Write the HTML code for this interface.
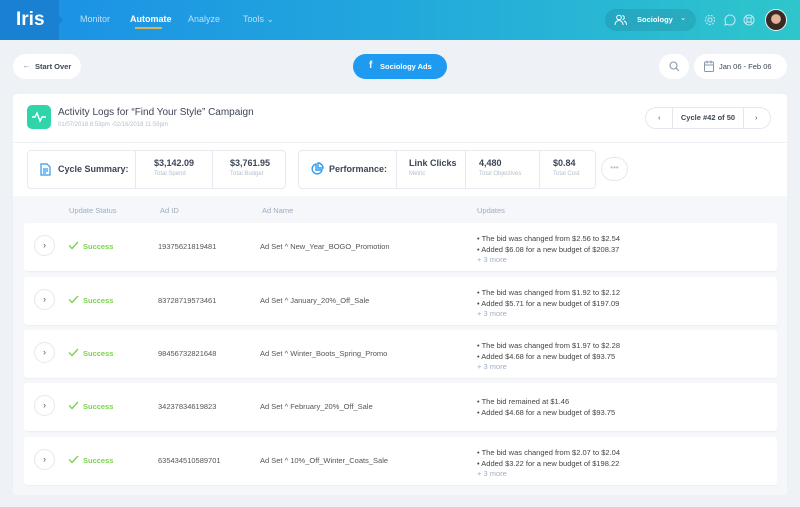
<!DOCTYPE html>
<html><head><style>
*{margin:0;padding:0;box-sizing:border-box}
body{width:800px;height:507px;background:#eef1f6;font-family:"Liberation Sans",sans-serif;position:relative;overflow:hidden;color:#3d4656}
.abs{position:absolute}
.hdr{left:0;top:0;width:800px;height:40px;background:linear-gradient(90deg,#1b8fe6 0%,#22a8dc 50%,#2ec6cc 100%)}
.logo{left:0;top:0;width:59px;height:40px;background:#1a80d2;color:#fff;font-weight:bold;font-size:19px;padding:9px 0 0 16px}
.logo:after{content:"";position:absolute;right:-4px;top:16px;border-left:4px solid #1a80d2;border-top:4px solid transparent;border-bottom:4px solid transparent}
.nav{top:14px;font-size:9px;color:#bfe0f7}
.pill{background:#fff;border-radius:14px;font-size:7.5px;font-weight:bold;color:#3d4656}
.card{left:13px;top:94px;width:774px;height:401px;background:#fff;border-radius:4px}
.tbl{left:13px;top:196px;width:774px;height:299px;background:#f5f7fa;border-radius:0 0 4px 4px}
.row{left:24px;width:753px;height:48px;background:#fff;border-radius:3px;box-shadow:0 1px 1px rgba(0,0,0,.04);font-size:7.5px}
.row .c{position:absolute;left:10px;top:12px;width:21px;height:21px;border-radius:50%;border:1px solid #e4e8ee;text-align:center;line-height:19px;color:#555;font-size:9px}
.row .s{position:absolute;left:44px;top:19px;color:#7ed04f;font-weight:bold;padding-left:15px}
.row .s svg{position:absolute;left:0;top:-1px}
.row .id{position:absolute;left:134px;top:19px;color:#555}
.row .n{position:absolute;left:236px;top:19px;color:#555}
.row .u{position:absolute;left:453px;top:11px;color:#444;line-height:10.5px}
.row .u i{font-style:normal;color:#9fb0c4}
.box{border:1px solid #e6eaf0;border-radius:4px;height:39px;top:150px}
.val{font-size:9px;font-weight:bold;color:#3d4656}
.lbl{font-size:6px;color:#b4bfcc;margin-top:3px}
.th{top:206px;font-size:7.5px;color:#9eacbd}
</style></head><body>
<div class="abs hdr"></div>
<div class="abs logo">Iris</div>
<div class="abs nav" style="left:80px">Monitor</div>
<div class="abs nav" style="left:130px;color:#fff;font-weight:bold">Automate</div>
<div class="abs" style="left:135px;top:27px;width:27px;height:2px;background:#d9b35a"></div>
<div class="abs nav" style="left:188px">Analyze</div>
<div class="abs nav" style="left:243px">Tools ⌄</div>
<div class="abs" style="left:605px;top:9px;width:91px;height:22px;border-radius:11px;background:rgba(0,0,0,.09);color:#fff;font-size:7.5px;font-weight:bold;padding:6px 0 0 32px">Sociology<span style="position:absolute;left:75px;top:4px;font-weight:normal">⌄</span></div>
<svg class="abs" style="left:614px;top:14px" width="13" height="12" viewBox="0 0 13 12" fill="none" stroke="#fff" stroke-width="1"><circle cx="5" cy="3.5" r="2.3"/><path d="M1 11c0-3 2-4.5 4-4.5s4 1.5 4 4.5M8.5 1.5a2.2 2.2 0 0 1 0 4.3M10 7c1.5.5 2.5 2 2.5 4"/></svg>
<svg class="abs" style="left:704px;top:14px" width="12" height="12" viewBox="0 0 12 12" fill="none" stroke="#bfe6f2" stroke-width="1.1"><circle cx="6" cy="6" r="2"/><circle cx="6" cy="6" r="4.6" stroke-dasharray="2 1.2"/></svg>
<svg class="abs" style="left:724px;top:14px" width="12" height="12" viewBox="0 0 12 12" fill="none" stroke="#bfe6f2" stroke-width="1.1"><path d="M6 1a5 5 0 1 1-2.5 9.3L1 11l.7-2.5A5 5 0 0 1 6 1z"/></svg>
<svg class="abs" style="left:743px;top:14px" width="12" height="12" viewBox="0 0 12 12" fill="none" stroke="#bfe6f2" stroke-width="1.1"><circle cx="6" cy="6" r="5"/><circle cx="6" cy="6" r="2.2"/><path d="M2.5 2.5l2 2M9.5 2.5l-2 2M2.5 9.5l2-2M9.5 9.5l-2-2"/></svg>
<div class="abs" style="left:765px;top:9px;width:22px;height:22px;border-radius:50%;border:1.5px solid #e8f6f8;background:radial-gradient(circle at 50% 45%,#e2b49a 0 30%,#3a2a26 35%)"></div>

<div class="abs pill" style="left:13px;top:54px;width:68px;height:25px;padding:8px 0 0 22px"><span style="position:absolute;left:9px;top:6px;color:#8aa0b8;font-weight:normal;font-size:9px">←</span>Start Over</div>
<div class="abs" style="left:353px;top:54px;width:94px;height:25px;border-radius:13px;background:#1e9af0;color:#fff;font-size:7.5px;font-weight:bold;padding:8px 0 0 27px"><span style="position:absolute;left:16px;top:6px;font-size:10px">f</span>Sociology Ads</div>
<div class="abs pill" style="left:659px;top:54px;width:30px;height:25px"></div>
<svg class="abs" style="left:669px;top:61px" width="11" height="11" viewBox="0 0 11 11" fill="none" stroke="#8a97a8" stroke-width="1.1"><circle cx="4.5" cy="4.5" r="3.5"/><path d="M7 7l3 3"/></svg>
<div class="abs pill" style="left:694px;top:54px;width:93px;height:25px;padding:8px 0 0 25px;font-weight:normal">Jan 06 - Feb 06</div>
<svg class="abs" style="left:704px;top:60px" width="10" height="12" viewBox="0 0 10 12" fill="none" stroke="#8a97a8" stroke-width="1"><rect x="0.5" y="2" width="9" height="9.5" rx="1"/><path d="M0.5 5h9M3 0.5v3M7 0.5v3"/></svg>

<div class="abs card"></div>
<div class="abs" style="left:27px;top:105px;width:24px;height:24px;border-radius:5px;background:#2fd5a8"></div>
<svg class="abs" style="left:31px;top:111px" width="16" height="12" viewBox="0 0 16 12" fill="none" stroke="#fff" stroke-width="1.4"><path d="M1 6h3l2-4 3 8 2-4h4"/></svg>
<div class="abs" style="left:58px;top:107px;font-size:10px;color:#3d4656">Activity Logs for “Find Your Style” Campaign</div>
<div class="abs" style="left:58px;top:122px;font-size:6px;color:#b4bfcc">01/07/2018 8:53pm -02/16/2018 11:59pm</div>
<div class="abs" style="left:645px;top:107px;width:126px;height:22px;border:1px solid #e4e8ee;border-radius:11px;font-size:7.5px;color:#3d4656">
<span style="position:absolute;left:12px;top:5px">‹</span><span style="position:absolute;left:26px;top:0;width:72px;height:20px;border-left:1px solid #e4e8ee;border-right:1px solid #e4e8ee;text-align:center;line-height:20px;font-weight:bold">Cycle #42 of 50</span><span style="position:absolute;left:109px;top:5px">›</span></div>
<div class="abs" style="left:13px;top:142px;width:774px;height:1px;background:#eef1f5"></div>

<div class="abs box" style="left:27px;width:259px"></div>
<svg class="abs" style="left:40px;top:163px" width="11" height="13" viewBox="0 0 11 13" fill="none" stroke="#2c9af0" stroke-width="1.2"><path d="M1 1h6l3 3v8H1z"/><path d="M3 6h5M3 8h5M3 10h3"/></svg>
<div class="abs" style="left:58px;top:164px;font-size:9px;font-weight:bold;color:#3d4656">Cycle Summary:</div>
<div class="abs" style="left:135px;top:150px;width:1px;height:39px;background:#e6eaf0"></div>
<div class="abs" style="left:212px;top:150px;width:1px;height:39px;background:#e6eaf0"></div>
<div class="abs" style="left:154px;top:158px"><div class="val">$3,142.09</div><div class="lbl">Total Spend</div></div>
<div class="abs" style="left:230px;top:158px"><div class="val">$3,761.95</div><div class="lbl">Total Budget</div></div>
<div class="abs box" style="left:298px;width:298px"></div>
<svg class="abs" style="left:310px;top:162px" width="14" height="14" viewBox="0 0 14 14" fill="none" stroke="#2c9af0" stroke-width="1.4"><path d="M6 2a5 5 0 1 0 6 6H6z"/><path d="M8 1v5h5a5 5 0 0 0-5-5z"/></svg>
<div class="abs" style="left:329px;top:164px;font-size:9px;font-weight:bold;color:#3d4656">Performance:</div>
<div class="abs" style="left:396px;top:150px;width:1px;height:39px;background:#e6eaf0"></div>
<div class="abs" style="left:465px;top:150px;width:1px;height:39px;background:#e6eaf0"></div>
<div class="abs" style="left:539px;top:150px;width:1px;height:39px;background:#e6eaf0"></div>
<div class="abs" style="left:409px;top:158px"><div class="val">Link Clicks</div><div class="lbl">Metric</div></div>
<div class="abs" style="left:479px;top:158px"><div class="val">4,480</div><div class="lbl">Total Objectives</div></div>
<div class="abs" style="left:553px;top:158px"><div class="val">$0.84</div><div class="lbl">Total Cost</div></div>
<div class="abs" style="left:601px;top:157px;width:27px;height:24px;border-radius:12px;border:1px solid #e4e8ee;text-align:center;color:#b4bfcc;font-size:8px;line-height:20px">•••</div>

<div class="abs tbl"></div>
<div class="abs th" style="left:69px">Update Status</div>
<div class="abs th" style="left:160px">Ad ID</div>
<div class="abs th" style="left:262px">Ad Name</div>
<div class="abs th" style="left:477px">Updates</div>

<div class="abs row" style="top:223px"><div class="c">›</div><div class="s"><svg width="11" height="9" viewBox="0 0 11 9" fill="none" stroke="#7ed04f" stroke-width="1.3"><path d="M1 4.5l3 3 6-6.5"/></svg>Success</div><div class="id">19375621819481</div><div class="n">Ad Set ^ New_Year_BOGO_Promotion</div><div class="u">• The bid was changed from $2.56 to $2.54<br>• Added $6.08 for a new budget of $208.37<br><i>+ 3 more</i></div></div>
<div class="abs row" style="top:277px"><div class="c">›</div><div class="s"><svg width="11" height="9" viewBox="0 0 11 9" fill="none" stroke="#7ed04f" stroke-width="1.3"><path d="M1 4.5l3 3 6-6.5"/></svg>Success</div><div class="id">83728719573461</div><div class="n">Ad Set ^ January_20%_Off_Sale</div><div class="u">• The bid was changed from $1.92 to $2.12<br>• Added $5.71 for a new budget of $197.09<br><i>+ 3 more</i></div></div>
<div class="abs row" style="top:330px"><div class="c">›</div><div class="s"><svg width="11" height="9" viewBox="0 0 11 9" fill="none" stroke="#7ed04f" stroke-width="1.3"><path d="M1 4.5l3 3 6-6.5"/></svg>Success</div><div class="id">98456732821648</div><div class="n">Ad Set ^ Winter_Boots_Spring_Promo</div><div class="u">• The bid was changed from $1.97 to $2.28<br>• Added $4.68 for a new budget of $93.75<br><i>+ 3 more</i></div></div>
<div class="abs row" style="top:383px"><div class="c">›</div><div class="s"><svg width="11" height="9" viewBox="0 0 11 9" fill="none" stroke="#7ed04f" stroke-width="1.3"><path d="M1 4.5l3 3 6-6.5"/></svg>Success</div><div class="id">34237834619823</div><div class="n">Ad Set ^ February_20%_Off_Sale</div><div class="u" style="top:14px">• The bid remained at $1.46<br>• Added $4.68 for a new budget of $93.75</div></div>
<div class="abs row" style="top:437px"><div class="c">›</div><div class="s"><svg width="11" height="9" viewBox="0 0 11 9" fill="none" stroke="#7ed04f" stroke-width="1.3"><path d="M1 4.5l3 3 6-6.5"/></svg>Success</div><div class="id">635434510589701</div><div class="n">Ad Set ^ 10%_Off_Winter_Coats_Sale</div><div class="u">• The bid was changed from $2.07 to $2.04<br>• Added $3.22 for a new budget of $198.22<br><i>+ 3 more</i></div></div>
</body></html>
